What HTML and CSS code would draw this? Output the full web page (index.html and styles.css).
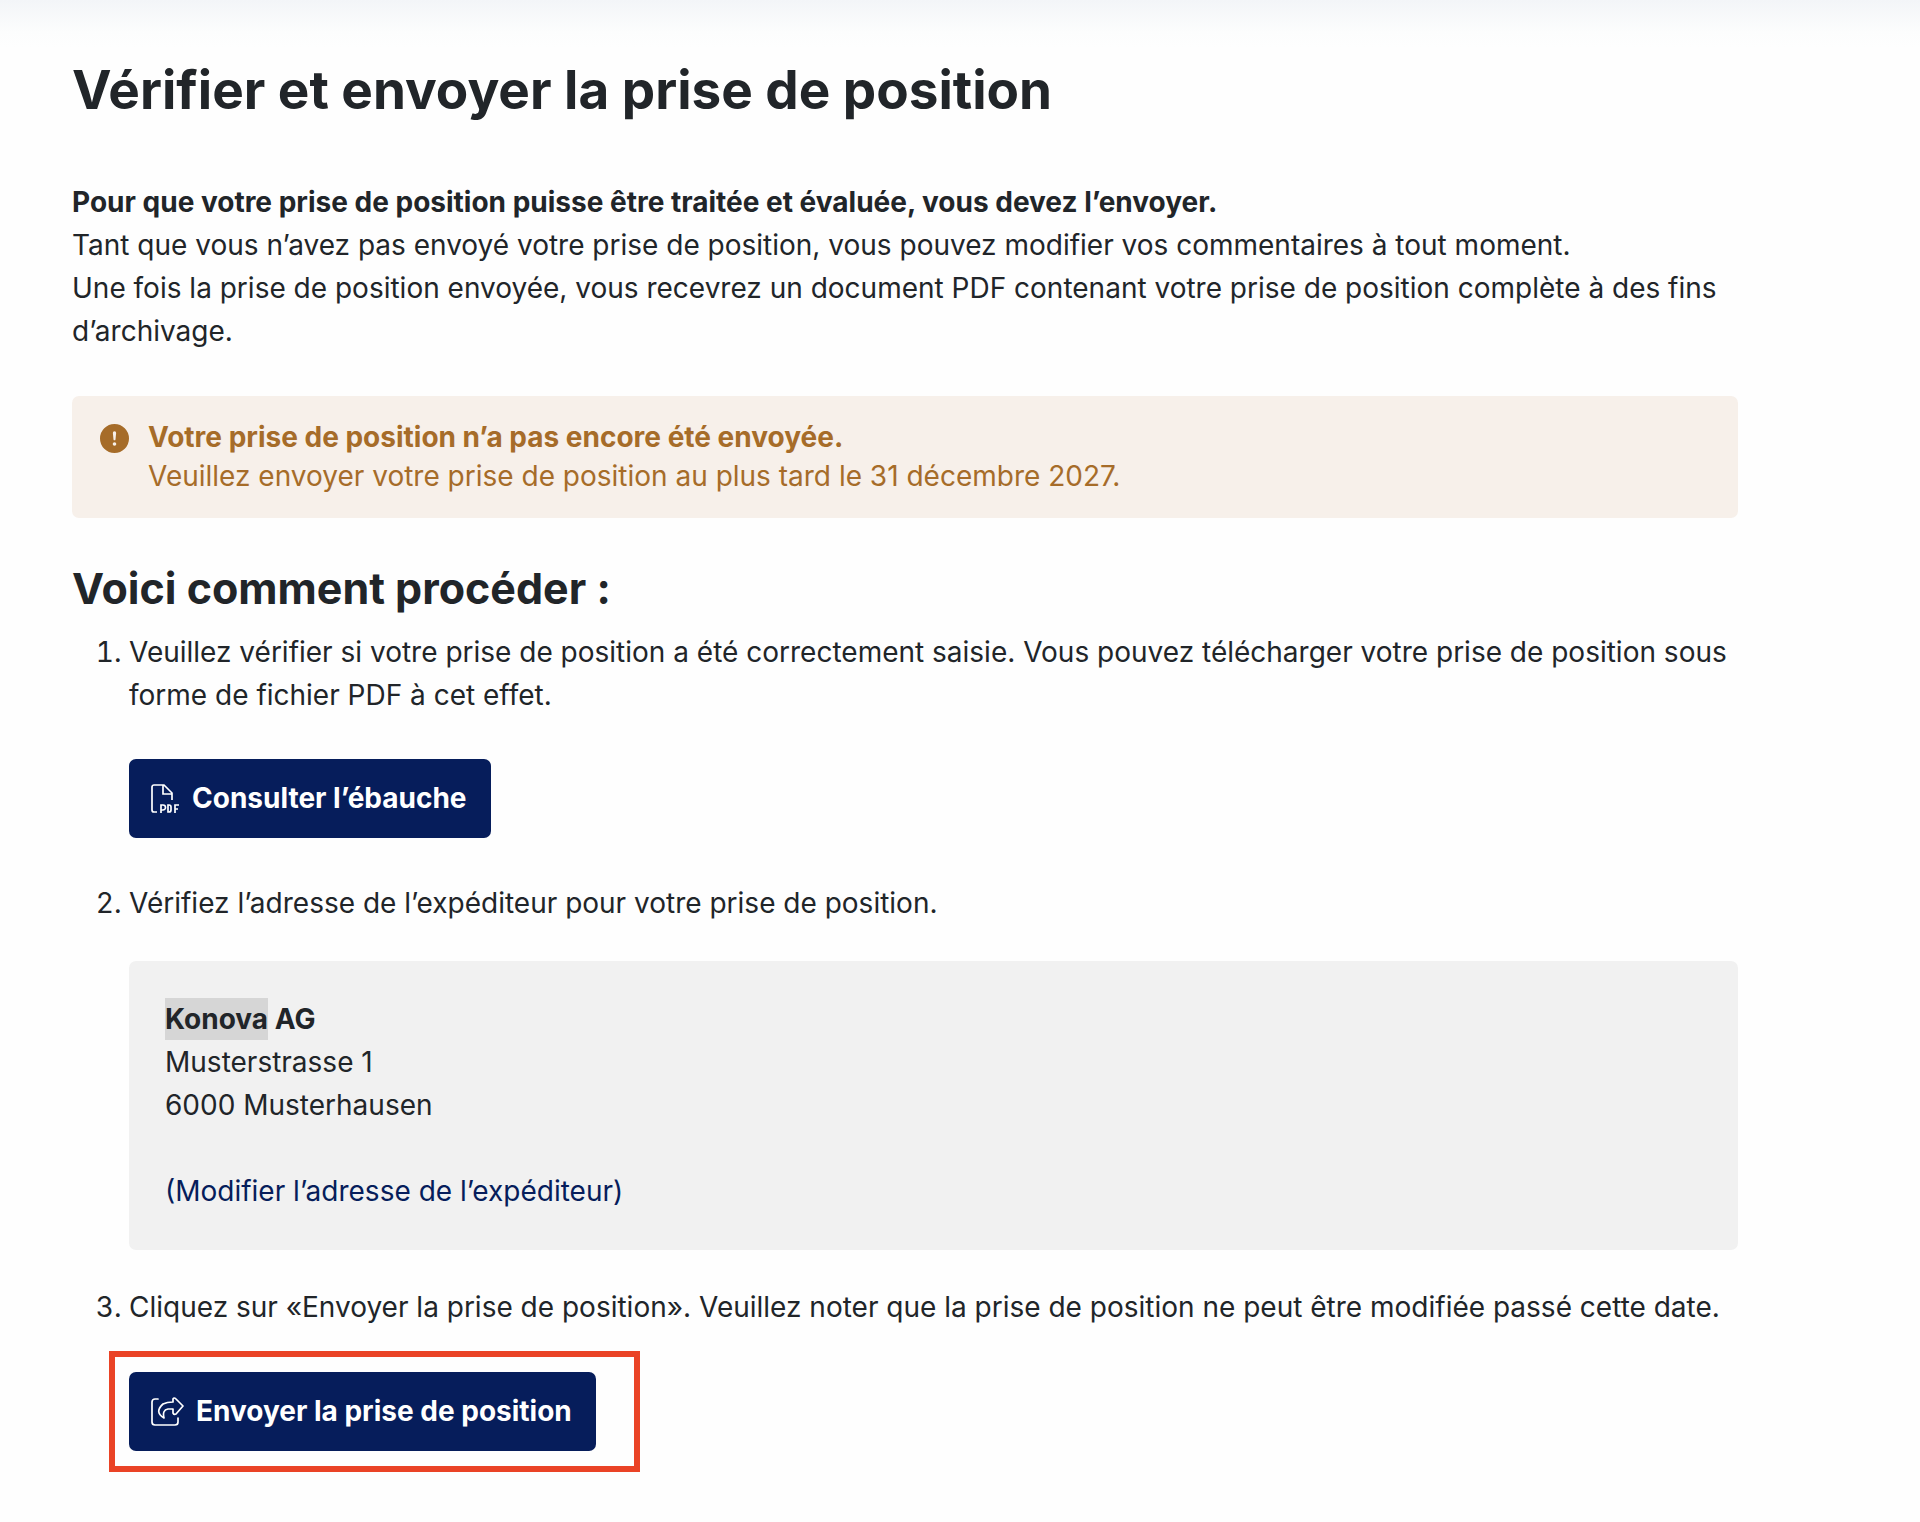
FILE: index.html
```
<!DOCTYPE html>
<html lang="fr">
<head>
  <meta charset="UTF-8">
  <title>Vérifier et envoyer la prise de position</title>
  <link rel="stylesheet" href="styles.css">
</head>
<body>
  <main class="content">
    <h1>Vérifier et envoyer la prise de position</h1>

    <p class="intro">
      <strong>Pour que votre prise de position puisse être traitée et évaluée, vous devez l’envoyer.</strong><br>
      Tant que vous n’avez pas envoyé votre prise de position, vous pouvez modifier vos commentaires à tout moment.<br>
      Une fois la prise de position envoyée, vous recevrez un document PDF contenant votre prise de position complète à des fins d’archivage.
    </p>

    <div class="alert">
      <svg class="alert-icon" viewBox="0 0 16 16" fill="currentColor" aria-hidden="true">
        <path d="M16 8A8 8 0 1 1 0 8a8 8 0 0 1 16 0M8 4a.905.905 0 0 0-.9.995l.35 3.507a.552.552 0 0 0 1.1 0l.35-3.507A.905.905 0 0 0 8 4m.002 6a1 1 0 1 0 0 2 1 1 0 0 0 0-2"/>
      </svg>
      <div>
        <strong>Votre prise de position n’a pas encore été envoyée.</strong><br>
        Veuillez envoyer votre prise de position au plus tard le 31 décembre 2027.
      </div>
    </div>

    <h2>Voici comment procéder :</h2>
    <ol class="steps">
      <li>
        Veuillez vérifier si votre prise de position a été correctement saisie. Vous pouvez télécharger votre prise de position sous forme de fichier PDF à cet effet.
        <div class="action">
          <button type="button" class="btn">
            <svg class="btn-icon" viewBox="0 0 29 29" fill="none" stroke="currentColor" stroke-width="1.7" aria-hidden="true">
              <path d="M6 28H3a2 2 0 0 1-2-2V3a2 2 0 0 1 2-2h10l8 8v7M12 1v9h9"/>
              <path d="M10 29v-8h2a2 2 0 0 1 0 5h-2M17 21v7h1a2 2 0 0 0 2-2v-3a2 2 0 0 0-2-2zM24 29v-8h4M24 25h3"/>
            </svg>
            Consulter l’ébauche
          </button>
        </div>
      </li>
      <li>
        Vérifiez l’adresse de l’expéditeur pour votre prise de position.
        <address class="address">
          <strong><mark>Konova</mark> AG</strong><br>
          Musterstrasse 1<br>
          6000 Musterhausen<br>
          <br>
          <a href="#">(Modifier l’adresse de l’expéditeur)</a>
        </address>
      </li>
      <li>
        Cliquez sur «Envoyer la prise de position». Veuillez noter que la prise de position ne peut être modifiée passé cette date.
        <div class="highlight">
          <button type="button" class="btn">
            <svg class="btn-icon btn-icon-wide" viewBox="0 0 33 29" fill="none" stroke="currentColor" stroke-width="1.7" stroke-linejoin="round" stroke-linecap="round" aria-hidden="true">
              <path d="M7 2H4a3 3 0 0 0-3 3v20a3 3 0 0 0 3 3h20a3 3 0 0 0 3-3v-4"/>
              <path d="M22 5V2q1-2 3 0l7 7-7 8q-2 1-3-1v-4h-5q-6 1-4 9Q3 15 12 7q4-2 10-2z"/>
            </svg>
            Envoyer la prise de position
          </button>
        </div>
      </li>
    </ol>
  </main>
</body>
</html>
```
FILE: styles.css
```
* {
  box-sizing: border-box;
}
html {
  background: #fefefe;
}
body {
  margin: 0;
  background: linear-gradient(#f3f5f8, #fcfdfd 32px, #fefefe 48px) no-repeat;
  color: #212529;
  font-family: Inter, "Liberation Sans", sans-serif;
  font-size: 28px;
  line-height: 43px;
}
.content {
  margin: 0 182px 0 72px;
  padding-top: 58px;
}
h1 {
  margin: 0 0 59px;
  font-size: 53px;
  line-height: 64px;
}
h2 {
  margin: 38px 0 11px;
  font-size: 43px;
  line-height: 64px;
}
.intro {
  margin: 0 0 43px;
}
.alert {
  display: flex;
  gap: 19px;
  padding: 22px 28px;
  border-radius: 7px;
  background: #f7f0ea;
  color: #a66c29;
  line-height: 39px;
}
.alert-icon {
  flex: none;
  width: 29px;
  height: 29px;
  margin-top: 6px;
}
.steps {
  margin: 0;
  padding-left: 57px;
}
.steps li {
  margin-bottom: 36px;
}
.action {
  margin: 42px 0 44px;
}
.btn {
  display: flex;
  align-items: center;
  gap: 12px;
  height: 79px;
  padding: 0 24px 0 22px;
  border: 0;
  border-radius: 7px;
  background: #061d5b;
  color: #fff;
  font: inherit;
  font-weight: 700;
}
.btn-icon {
  width: 29px;
  height: 29px;
}
.btn-icon-wide {
  width: 33px;
}
.address {
  margin-top: 36px;
  padding: 37px 36px;
  border-radius: 7px;
  background: #f1f1f1;
  font-style: normal;
}
.address mark {
  padding: 4px 0;
  background: #d6d6d6;
  color: inherit;
}
.address a {
  color: #061d5b;
  text-decoration: none;
}
.highlight {
  width: fit-content;
  margin: 22px 0 0 -20px;
  padding: 15px 38px 15px 14px;
  border: 6px solid #ea4326;
}
```
